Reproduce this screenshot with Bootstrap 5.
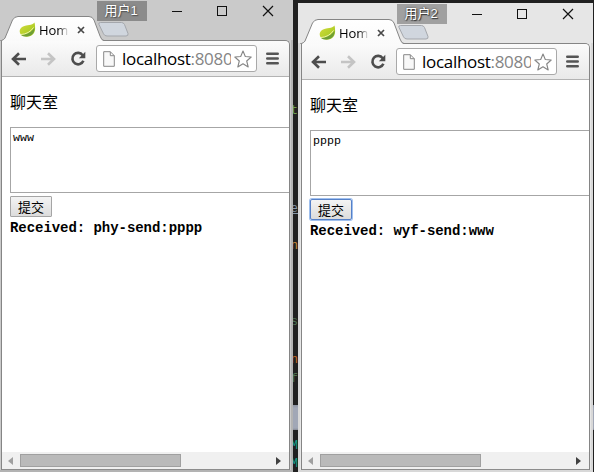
<!DOCTYPE html>
<html lang="zh">
<head>
<meta charset="utf-8">
<title>Home</title>
<link href="https://cdn.jsdelivr.net/npm/bootstrap@5.3.0/dist/css/bootstrap.min.css" rel="stylesheet">
<style>
html,body{width:594px;height:472px;overflow:hidden}
body{background:#202020;color:#000;font-family:"Liberation Sans","Noto Sans CJK SC",sans-serif;line-height:1}
svg{display:block;flex:none}
.desktop{width:594px;height:472px;background:linear-gradient(#202020 0 405px,#8d93a0 405px,#a1a7b6 408px,#a1a7b6 428px,#858994 430px,#202020 430px)}
.code{left:293px;width:5px;height:14px;overflow:hidden;font:12px/14px "Liberation Mono",monospace;direction:rtl}
.win{width:295px;padding:0 3px 2px;background:#cacaca;overflow:hidden}
.win-a{left:-2px;top:0;height:472px}
.win-b{left:298px;top:3px;height:469px;background:#e6e6e6}
.edges{inset:40px 0 0 0;border:solid #b3b3b3;border-width:0 2px 2px;pointer-events:none}
.win-b .edges{border-color:#d8d8d8}
.titlebar{height:40px;flex:none}
.tabbox{width:100px;height:41px;z-index:2}
.tabbox .shape{left:-1px;top:14px}
.tabrow{padding:22px 0 0 18px;height:40px}
.tabname{font:13px/16px "Open Sans","Noto Sans",sans-serif;letter-spacing:-.1px;width:30px;margin-left:3px;overflow:hidden;-webkit-mask-image:linear-gradient(90deg,#000 65%,transparent);mask-image:linear-gradient(90deg,#000 65%,transparent)}
.user{left:99px;top:1px;width:50px;height:20px;background:#8b8b8b;color:#fff;font:13px/19px "Liberation Sans","Noto Sans CJK SC",sans-serif;text-shadow:0 0 2px #555,1px 1px 1px #555;padding-right:2px}
.win-b .user{background:#a0a0a0;text-shadow:0 0 2px #333,1px 1px 1px #333}
.newtab{margin-top:21px;margin-left:-4px}
.controls{margin:5px 16px 0 auto;gap:34px}
.pane{border:1px solid #858585;border-bottom:0;border-top-right-radius:5px;min-height:0}
.toolbar{height:36px;background:linear-gradient(#fbfbfb,#e9e9e9);border-bottom:1px solid #b3b3b3;border-top-right-radius:4px;padding:0 10px 0 9px;flex:none}
.urlbox{width:161px;height:27px;background:#fff;border:1px solid #a9a9a9;border-radius:3px;margin-left:10px;padding-left:6px}
.url{font:17px/24px "Open Sans","Noto Sans",sans-serif;width:109px;letter-spacing:-.3px;white-space:nowrap;overflow:hidden;margin-left:7px}
.url span{color:#858585}
.page{background:#fff;padding:14px 0 0 8px;overflow:hidden;min-height:0}
.room{font:16px/21px "Noto Sans CJK SC",sans-serif;margin:0 0 15px}
.msg{display:block;width:310px;height:66px;border:1px solid #a6a6a6;padding:3px 2px;font:11.67px/15px "Liberation Mono",monospace;resize:none;outline:0;border-radius:0;overflow:hidden;color:#000;background:#fff}
.send{margin-top:3px;width:42px;height:21px;border:1px solid #a5a5a5;border-radius:1px;background:linear-gradient(#f4f4f4,#dcdcdc);font:13px/18px "Noto Sans CJK SC",sans-serif;padding:0;display:block;color:#000}
.win-b .send{border-color:#5580c8;box-shadow:0 0 0 1px #a0c0ee;border-radius:2px}
.got{font:bold 14px/18px "Liberation Mono",monospace;letter-spacing:-.05px;margin-top:2px;white-space:nowrap}
.scroll{height:17px;background:#f0f0f0;padding:0 8px 0 6px;flex:none}
.thumb{width:161px;height:13px;background:#bababa;border:1px solid #a0a0a0;margin-left:7px}
.floor{height:1px;background:#8c8c8c;flex:none}
</style>
<script src="https://cdn.jsdelivr.net/npm/bootstrap@5.3.0/dist/js/bootstrap.bundle.min.js"></script>
</head>
<body>
<svg width="0" height="0" class="position-absolute">
<defs>
<linearGradient id="tg" x1="0" y1="0" x2="0" y2="1"><stop offset="0" stop-color="#fff"/><stop offset="1" stop-color="#fafafa"/></linearGradient>
<linearGradient id="lg" x1="0" y1="0" x2="1" y2="1"><stop offset="0" stop-color="#d4dc3c"/><stop offset="1" stop-color="#9cc61c"/></linearGradient>
<symbol id="tab" viewBox="0 0 104 27"><path d="M0 27C3 26 4 25.500 5 24L12.500 6Q14.500 2.500 18 2.500H89Q92.500 2.500 94 6L100 22Q101.500 26.500 104 27Z" fill="url(#tg)"/><path d="M0 27C3 26 4 25.500 5 24L12.500 6Q14.500 2.500 18 2.500H89Q92.500 2.500 94 6L100 22Q101.500 26.500 104 26.500" fill="none" stroke="#858585"/></symbol>
<symbol id="leaf" viewBox="0 0 17 16"><path d="M15.500 .5C13 4 8 2.500 4 4.500C-1 7 .5 12 3 13.500C8 16 15 14.500 16 8C16.300 5 16 2.500 15.500.5Z" fill="url(#lg)"/><path d="M2 13C8 12.500 13 10 15.500 5.500C16 11 12 15 6.500 14.500Q4 14.500 2 13Z" fill="#6f9e35"/><path d="M2 12.500Q10 12 14.500 5.500" stroke="#edf3a8" fill="none"/></symbol>
<symbol id="x" viewBox="0 0 8 8"><path d="M1 1L7 7M7 1L1 7" stroke="#484848" stroke-width="1.700"/></symbol>
<symbol id="ntab" viewBox="0 0 33 16"><path d="M3.500 1.500H24.500Q26.500 1.500 27.500 3.500L31 12.500Q31.500 15 29 15H10Q7.500 15 6.500 12.800L2 3.500Q1 1.500 3.500 1.500Z" fill="#d0d6de" stroke="#a4a7ac"/></symbol>
<symbol id="back" viewBox="0 0 16 14"><path d="M15 7H2.500M8 1.200L2 7L8 12.800" fill="none" stroke="currentColor" stroke-width="2.600"/></symbol>
<symbol id="reload" viewBox="0 0 16 16"><path d="M12.700 4.200A5.700 5.700 0 1 0 13.400 9.800" fill="none" stroke="#4d4d4d" stroke-width="2.600"/><path d="M15.300 .8V7.300H8.800Z" fill="#4d4d4d"/></symbol>
<symbol id="doc" viewBox="0 0 12 16"><path d="M.7 .7H7.300L11.300 4.700V15.300H.7ZM7.300 .7V4.700H11.300" fill="#f8f8f8" stroke="#888"/></symbol>
<symbol id="star" viewBox="0 0 18 18"><path d="M9 1L11.300 6.500L17.200 7L12.700 11L14.200 17L9 13.800L3.800 17L5.300 11L.8 7L6.700 6.500Z" fill="#fff" stroke="#858585" stroke-width="1.100" stroke-linejoin="round"/></symbol>
<symbol id="menu" viewBox="0 0 13 13"><path d="M1.300 1.700H11.700M1.300 6.500H11.700M1.300 11.300H11.700" stroke="#555" stroke-width="2.600" stroke-linecap="round"/></symbol>
</defs></svg>
<main class="desktop position-relative overflow-hidden">
<div class="code position-absolute" style="top:104px;color:#6f9e50">t</div>
<div class="code position-absolute text-decoration-underline" style="top:202px;color:#8797a8">e</div>
<div class="code position-absolute" style="top:239px;color:#c78b3a">n</div>
<div class="code position-absolute" style="top:315px;color:#4d7050">s</div>
<div class="code position-absolute" style="top:353px;color:#c26a25">n</div>
<div class="code position-absolute" style="top:372px;color:#4d7050">f</div>
<div class="code position-absolute" style="top:439px;color:#13a08c">M</div>
<div class="code position-absolute" style="top:457px;color:#13a08c">M</div>

<section class="win win-a position-absolute d-flex flex-column">
<div class="edges position-absolute"></div>
<div class="user position-absolute text-center">用户1</div>
<header class="titlebar d-flex align-items-start">
<div class="tabbox position-relative">
<svg class="shape position-absolute" width="104" height="27"><use href="#tab"/></svg>
<div class="tabrow position-relative d-flex align-items-start"><svg width="17" height="16"><use href="#leaf"/></svg><span class="tabname">Home</span><svg class="ms-2 mt-1" width="8" height="8"><use href="#x"/></svg></div>
</div>
<svg class="newtab" width="33" height="16"><use href="#ntab"/></svg>
<div class="controls d-flex"><svg width="11" height="12"><path d="M0 6.500H10" stroke="#111"/></svg><svg width="11" height="12"><rect x=".5" y="1.500" width="9" height="9" fill="none" stroke="#111"/></svg><svg width="12" height="12"><path d="M1 1L11 11M11 1L1 11" stroke="#111" stroke-width="1.200"/></svg></div>
</header>
<div class="pane d-flex flex-column flex-grow-1">
<nav class="toolbar d-flex align-items-center">
<svg width="16" height="14" color="#4d4d4d"><use href="#back"/></svg>
<svg width="16" height="14" color="#c4c4c4" style="margin-left:13px;transform:scaleX(-1)"><use href="#back"/></svg>
<svg width="16" height="16" style="margin-left:14px"><use href="#reload"/></svg>
<div class="urlbox d-flex align-items-center"><svg width="12" height="16"><use href="#doc"/></svg><div class="url">localhost<span>:8080</span></div><svg width="18" height="18" style="margin-left:3px"><use href="#star"/></svg></div>
<svg class="ms-auto" width="13" height="13"><use href="#menu"/></svg>
</nav>
<div class="page flex-grow-1"><p class="room">聊天室</p><textarea class="msg">www</textarea><button class="send">提交</button><div class="got">Received: phy-send:pppp</div></div>
<div class="scroll d-flex align-items-center"><svg width="5" height="8"><path d="M5 0V8L0 4Z" fill="#a0a0a0"/></svg><div class="thumb"></div><svg class="ms-auto" width="5" height="8"><path d="M0 0V8L5 4Z" fill="#404040"/></svg></div>
<div class="floor"></div>
</div>
</section>

<section class="win win-b position-absolute d-flex flex-column">
<div class="edges position-absolute"></div>
<div class="user position-absolute text-center">用户2</div>
<header class="titlebar d-flex align-items-start">
<div class="tabbox position-relative">
<svg class="shape position-absolute" width="104" height="27"><use href="#tab"/></svg>
<div class="tabrow position-relative d-flex align-items-start"><svg width="17" height="16"><use href="#leaf"/></svg><span class="tabname">Home</span><svg class="ms-2 mt-1" width="8" height="8"><use href="#x"/></svg></div>
</div>
<svg class="newtab" width="33" height="16"><use href="#ntab"/></svg>
<div class="controls d-flex"><svg width="11" height="12"><path d="M0 6.500H10" stroke="#111"/></svg><svg width="11" height="12"><rect x=".5" y="1.500" width="9" height="9" fill="none" stroke="#111"/></svg><svg width="12" height="12"><path d="M1 1L11 11M11 1L1 11" stroke="#111" stroke-width="1.200"/></svg></div>
</header>
<div class="pane d-flex flex-column flex-grow-1">
<nav class="toolbar d-flex align-items-center">
<svg width="16" height="14" color="#4d4d4d"><use href="#back"/></svg>
<svg width="16" height="14" color="#c4c4c4" style="margin-left:13px;transform:scaleX(-1)"><use href="#back"/></svg>
<svg width="16" height="16" style="margin-left:14px"><use href="#reload"/></svg>
<div class="urlbox d-flex align-items-center"><svg width="12" height="16"><use href="#doc"/></svg><div class="url">localhost<span>:8080</span></div><svg width="18" height="18" style="margin-left:3px"><use href="#star"/></svg></div>
<svg class="ms-auto" width="13" height="13"><use href="#menu"/></svg>
</nav>
<div class="page flex-grow-1"><p class="room">聊天室</p><textarea class="msg">pppp</textarea><button class="send">提交</button><div class="got">Received: wyf-send:www</div></div>
<div class="scroll d-flex align-items-center"><svg width="5" height="8"><path d="M5 0V8L0 4Z" fill="#a0a0a0"/></svg><div class="thumb"></div><svg class="ms-auto" width="5" height="8"><path d="M0 0V8L5 4Z" fill="#404040"/></svg></div>
<div class="floor"></div>
</div>
</section>
</main>
</body>
</html>
